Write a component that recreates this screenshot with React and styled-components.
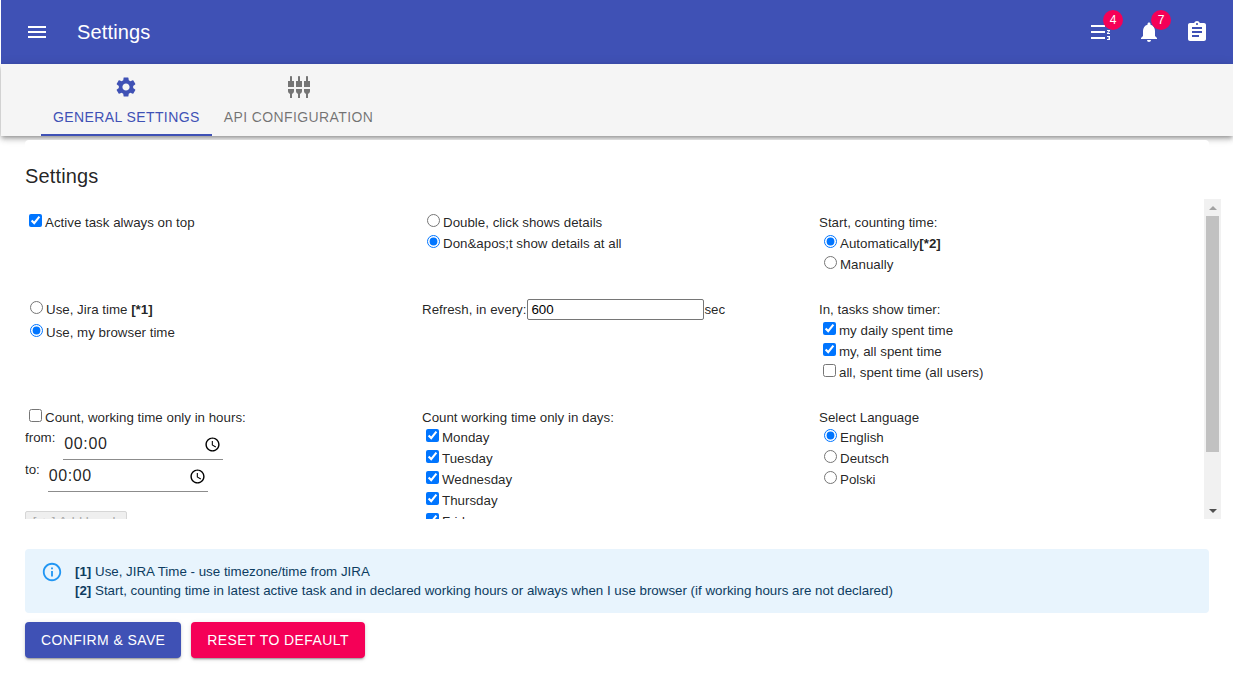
import React from 'react';
import styled, { createGlobalStyle } from 'styled-components';
import {
  MdMenu,
  MdFormatListNumberedRtl,
  MdNotifications,
  MdAssignment,
  MdSettings,
  MdSettingsInputComponent,
  MdAccessTime,
  MdInfoOutline,
} from 'react-icons/md';

const fontStack = '"Liberation Sans", Arial, sans-serif';

const GlobalStyle = createGlobalStyle`
  html, body {
    margin: 0;
    padding: 0;
    background: #fff;
    overflow: hidden;
  }
  body {
    font-family: ${fontStack};
    font-size: 13.33px;
    color: rgba(0, 0, 0, 0.87);
  }
`;

const Page = styled.div`
  margin-left: 1px;
  height: 679px;
  display: flex;
  flex-direction: column;
`;

const AppBar = styled.header`
  height: 64px;
  flex: none;
  display: flex;
  align-items: center;
  padding: 0 12px;
  background: #3f51b5;
  color: #fff;
`;

const Title = styled.h1`
  margin: 0 0 0 16px;
  font-size: 20px;
  font-weight: 400;
  letter-spacing: 0.0075em;
  flex: 1;
`;

const IconButton = styled.div`
  position: relative;
  width: 48px;
  height: 48px;
  display: flex;
  align-items: center;
  justify-content: center;
  font-size: 24px;
`;

const Badge = styled.span`
  position: absolute;
  top: 2px;
  right: 2px;
  width: 20px;
  height: 20px;
  border-radius: 50%;
  background: #f50057;
  color: #fff;
  font-size: 12px;
  display: flex;
  align-items: center;
  justify-content: center;
`;

const TabBar = styled.nav`
  height: 72px;
  flex: none;
  display: flex;
  padding-left: 40px;
  background: #f5f5f5;
  box-shadow: 0 2px 4px -1px rgba(0, 0, 0, 0.3), 0 4px 5px 0 rgba(0, 0, 0, 0.14), 0 1px 10px 0 rgba(0, 0, 0, 0.12);
`;

const Tab = styled.div`
  display: flex;
  flex-direction: column;
  align-items: center;
  justify-content: flex-end;
  gap: 10px;
  padding: 0 12px 8px;
  font-size: 14px;
  letter-spacing: 0.02857em;
  line-height: 17px;
  text-transform: uppercase;
  color: ${(p) => (p.$active ? '#3f51b5' : 'rgba(0, 0, 0, 0.54)')};
  border-bottom: 2px solid ${(p) => (p.$active ? '#3f51b5' : 'transparent')};
  svg {
    font-size: 24px;
    color: ${(p) => (p.$active ? '#3f51b5' : '#757575')};
  }
`;

const Paper = styled.main`
  position: relative;
  z-index: 1;
  margin: 4px 24px 0;
  padding-top: 20px;
  background: #fff;
  border-radius: 4px;
`;

const Heading = styled.h2`
  margin: 0 0 7px;
  font-size: 20px;
  font-weight: 400;
  line-height: 32px;
  letter-spacing: 0.0075em;
`;

const ScrollFrame = styled.div`
  height: 320px;
  margin-right: -12px;
  display: flex;
`;

const Viewport = styled.div`
  flex: 1;
  min-width: 0;
  overflow: hidden;
`;

const Rail = styled.div`
  width: 17px;
  flex: none;
  display: flex;
  flex-direction: column;
  background: #f1f1f1;
`;

const RailButton = styled.div`
  height: 17px;
  flex: none;
  display: flex;
  align-items: center;
  justify-content: center;
`;

const Arrow = styled.span`
  width: 0;
  height: 0;
  border-left: 4px solid transparent;
  border-right: 4px solid transparent;
  border-bottom: ${(p) => (p.$down ? '0' : '4px solid #a3a3a3')};
  border-top: ${(p) => (p.$down ? '4px solid #505050' : '0')};
`;

const Thumb = styled.div`
  height: 236px;
  flex: none;
  margin: 0 2px;
  background: #c1c1c1;
`;

const RailRest = styled.div`
  flex: 1;
`;

const Grid = styled.div`
  width: 1191px;
  padding: 13px 0 13px;
  display: grid;
  grid-template-columns: repeat(3, 397px);
  row-gap: 24px;
`;

const Cell = styled.div`
  min-width: 0;
`;

const Line = styled.div`
  display: flex;
  align-items: center;
  height: ${(p) => p.$height || 21}px;
  white-space: nowrap;
`;

const Check = styled.input.attrs({ type: 'checkbox' })`
  width: 13px;
  height: 13px;
  margin: 0 3px 4px 4px;
  flex: none;
`;

const Radio = styled.input.attrs({ type: 'radio' })`
  width: 13px;
  height: 13px;
  margin: 0 3px 4px 5px;
  flex: none;
`;

const RefreshInput = styled.input`
  box-sizing: border-box;
  width: 177px;
  height: 21px;
  margin: 0 0 0 1px;
  padding: 1px 3px;
  border: 1px solid #767676;
  border-radius: 2px;
  font: 13.33px ${fontStack};
  color: #000;
  outline: none;
`;

const TimeRow = styled.div`
  display: flex;
  align-items: flex-start;
  gap: 8px;
  height: 32px;
`;

const TimeLabel = styled.span`
  line-height: 19px;
`;

const TimeField = styled.div`
  box-sizing: border-box;
  width: 160px;
  height: 32px;
  padding: 1px 2px 0 1px;
  display: flex;
  align-items: center;
  justify-content: space-between;
  border-bottom: 1px solid #8c8c8c;
  font-size: 16px;
  letter-spacing: 0.6px;
  svg {
    font-size: 17px;
    color: #000;
  }
`;

const AddBreak = styled.button`
  display: block;
  box-sizing: border-box;
  width: 102px;
  height: 21px;
  margin-top: 19px;
  padding: 0;
  border: 1px solid #d6d6d6;
  border-radius: 2px;
  background: #efefef;
  color: #a8a8a8;
  font: 13.33px ${fontStack};
`;

const Alert = styled.section`
  display: flex;
  gap: 12px;
  margin-top: 30px;
  padding: 13px 16px;
  height: 64px;
  box-sizing: border-box;
  border-radius: 4px;
  background: #e8f4fd;
  color: rgb(13, 60, 97);
  line-height: 19px;
  > svg {
    flex: none;
    font-size: 22px;
    color: #2196f3;
    margin-top: -1px;
  }
`;

const Actions = styled.div`
  display: flex;
  gap: 10px;
  margin-top: 9px;
`;

const Button = styled.button`
  height: 36px;
  padding: 0 16px;
  border: 0;
  border-radius: 4px;
  background: ${(p) => (p.$tone === 'secondary' ? '#f50057' : '#3f51b5')};
  color: #fff;
  font: 14px ${fontStack};
  letter-spacing: 0.02857em;
  text-transform: uppercase;
  box-shadow: 0 3px 1px -2px rgba(0, 0, 0, 0.2), 0 2px 2px 0 rgba(0, 0, 0, 0.14), 0 1px 5px 0 rgba(0, 0, 0, 0.12);
`;

const days = [
  ['Monday', true],
  ['Tuesday', true],
  ['Wednesday', true],
  ['Thursday', true],
  ['Friday', true],
  ['Saturday', false],
  ['Sunday', false],
];

export default function App() {
  return (
    <>
      <GlobalStyle />
      <Page>
        <AppBar>
          <IconButton><MdMenu /></IconButton>
          <Title>Settings</Title>
          <IconButton><MdFormatListNumberedRtl /><Badge>4</Badge></IconButton>
          <IconButton><MdNotifications /><Badge>7</Badge></IconButton>
          <IconButton><MdAssignment /></IconButton>
        </AppBar>

        <TabBar>
          <Tab $active><MdSettings />General Settings</Tab>
          <Tab><MdSettingsInputComponent />API Configuration</Tab>
        </TabBar>

        <Paper>
          <Heading>Settings</Heading>
          <ScrollFrame>
            <Viewport>
              <Grid>
                <Cell>
                  <Line><Check defaultChecked />Active task always on top</Line>
                </Cell>
                <Cell>
                  <Line><Radio name="details" />Double, click shows details</Line>
                  <Line><Radio name="details" defaultChecked />Don&amp;apos;t show details at all</Line>
                </Cell>
                <Cell>
                  <Line $height={20}>Start, counting time:</Line>
                  <Line $height={22}><Radio name="start" defaultChecked />Automatically<b>[*2]</b></Line>
                  <Line><Radio name="start" />Manually</Line>
                </Cell>

                <Cell>
                  <Line><Radio name="clock" />Use, Jira time&nbsp;<b>[*1]</b></Line>
                  <Line $height={25}><Radio name="clock" defaultChecked />Use, my browser time</Line>
                </Cell>
                <Cell>
                  <Line>Refresh, in every:<RefreshInput defaultValue="600" />sec</Line>
                </Cell>
                <Cell>
                  <Line>In, tasks show timer:</Line>
                  <Line><Check defaultChecked />my daily spent time</Line>
                  <Line><Check defaultChecked />my, all spent time</Line>
                  <Line><Check />all, spent time (all users)</Line>
                </Cell>

                <Cell>
                  <Line><Check />Count, working time only in hours:</Line>
                  <TimeRow>
                    <TimeLabel>from:</TimeLabel>
                    <TimeField>00:00<MdAccessTime /></TimeField>
                  </TimeRow>
                  <TimeRow>
                    <TimeLabel>to:</TimeLabel>
                    <TimeField>00:00<MdAccessTime /></TimeField>
                  </TimeRow>
                  <AddBreak disabled>[ + ] Add break</AddBreak>
                </Cell>
                <Cell>
                  <Line $height={20}>Count working time only in days:</Line>
                  {days.map(([day, on]) => (
                    <Line key={day}><Check defaultChecked={on} />{day}</Line>
                  ))}
                </Cell>
                <Cell>
                  <Line $height={20}>Select Language</Line>
                  <Line><Radio name="lang" defaultChecked />English</Line>
                  <Line><Radio name="lang" />Deutsch</Line>
                  <Line><Radio name="lang" />Polski</Line>
                </Cell>
              </Grid>
            </Viewport>
            <Rail>
              <RailButton><Arrow /></RailButton>
              <Thumb />
              <RailRest />
              <RailButton><Arrow $down /></RailButton>
            </Rail>
          </ScrollFrame>

          <Alert>
            <MdInfoOutline />
            <div>
              <div><b>[1]</b> Use, JIRA Time - use timezone/time from JIRA</div>
              <div><b>[2]</b> Start, counting time in latest active task and in declared working hours or always when I use browser (if working hours are not declared)</div>
            </div>
          </Alert>

          <Actions>
            <Button>Confirm &amp; Save</Button>
            <Button $tone="secondary">Reset to default</Button>
          </Actions>
        </Paper>
      </Page>
    </>
  );
}
